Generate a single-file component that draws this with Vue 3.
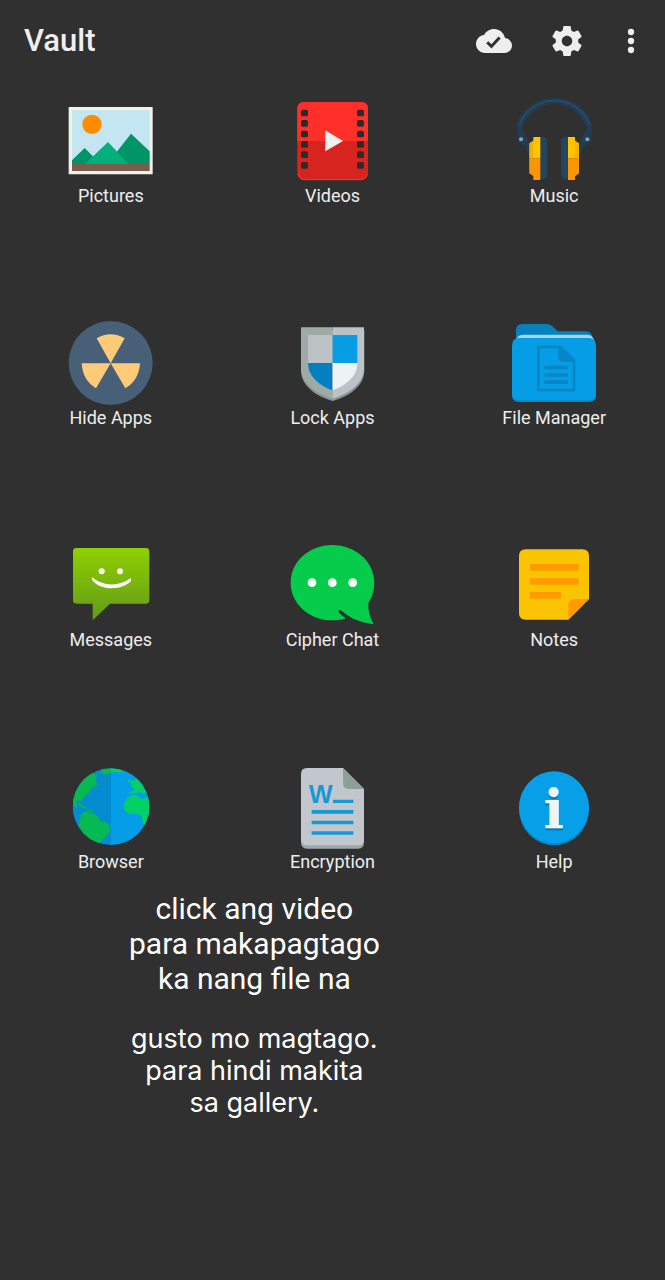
<script setup>
const apps = [
  { id: 'pictures', label: 'Pictures' },
  { id: 'videos', label: 'Videos' },
  { id: 'music', label: 'Music' },
  { id: 'hide', label: 'Hide Apps' },
  { id: 'lock', label: 'Lock Apps' },
  { id: 'files', label: 'File Manager' },
  { id: 'messages', label: 'Messages' },
  { id: 'chat', label: 'Cipher Chat' },
  { id: 'notes', label: 'Notes' },
  { id: 'browser', label: 'Browser' },
  { id: 'encryption', label: 'Encryption' },
  { id: 'help', label: 'Help' },
]
const holes = [59, 90, 122, 153, 184, 216]
</script>

<template>
  <div class="vault">
    <header class="bar">
      <h1 class="title">Vault</h1>
      <button class="action cloud" type="button" aria-label="Cloud backup">
        <svg viewBox="0 0 24 24"><path d="M19.350 10.040C18.670 6.590 15.640 4 12 4 9.110 4 6.600 5.640 5.350 8.040 2.340 8.360 0 10.910 0 14c0 3.310 2.690 6 6 6h13c2.760 0 5-2.240 5-5 0-2.640-2.050-4.780-4.650-4.960zM10.300 17l-3.500-3.500 1.410-1.410 2.090 2.080 4.700-5.170 1.480 1.340L10.300 17z" /></svg>
      </button>
      <button class="action gear" type="button" aria-label="Settings">
        <svg viewBox="0 0 24 24"><path d="M19.430 12.980c.04-.32.07-.64.07-.98s-.03-.66-.07-.98l2.110-1.650c.19-.15.24-.42.12-.64l-2-3.460c-.12-.22-.39-.3-.61-.22l-2.490 1c-.52-.4-1.080-.73-1.690-.98l-.38-2.650C14.460 2.180 14.250 2 14 2h-4c-.25 0-.46.18-.49.42l-.38 2.650c-.61.25-1.170.59-1.690.98l-2.490-1c-.23-.09-.49 0-.61.22l-2 3.460c-.13.22-.07.49.12.64l2.110 1.650c-.04.32-.07.65-.07.98s.03.66.07.98l-2.110 1.650c-.19.15-.24.42-.12.64l2 3.460c.12.22.39.3.61.22l2.490-1c.52.4 1.080.73 1.690.98l.38 2.650c.03.24.24.42.49.42h4c.25 0 .46-.18.49-.42l.38-2.650c.61-.25 1.170-.59 1.690-.98l2.490 1c.23.09.49 0 .61-.22l2-3.460c.12-.22.07-.49-.12-.64l-2.110-1.650zM12 15.500c-1.930 0-3.500-1.570-3.500-3.500s1.570-3.500 3.500-3.500 3.500 1.570 3.500 3.500-1.570 3.500-3.500 3.500z" /></svg>
      </button>
      <button class="action" type="button" aria-label="More options">
        <svg viewBox="0 0 24 24"><circle cx="12" cy="6" r="2.100" /><circle cx="12" cy="12" r="2.100" /><circle cx="12" cy="18" r="2.100" /></svg>
      </button>
    </header>

    <main>
      <nav class="grid" aria-label="Vault sections">
        <button v-for="(app, i) in apps" :key="app.id" class="tile" type="button">
          <svg class="icon" :viewBox="i % 3 ? '54 27 252 252' : '57 27 252 252'" aria-hidden="true">
            <g v-if="app.id === 'pictures'">
              <path fill="#f2f2ec" d="M56 51h252v202H56z" />
              <path fill="#c4e6f2" d="M66 61h233v182H66z" />
              <circle cx="126" cy="103" r="29" fill="#ff8c00" />
              <path fill="#009467" d="M66 211l38-37 26 26 30 22H66zM200 186l43-55 56 53v38h-99z" />
              <path fill="#02b07c" d="M105 222l69-66 62 66z" />
              <path fill="#7b5d4d" d="M66 222h233v21H66z" />
            </g>
            <g v-else-if="app.id === 'videos'">
              <rect x="76" y="36" width="212" height="234" rx="20" fill="#d8241f" />
              <path fill="#ff3029" d="M76 153V56q0-20 20-20h172q20 0 20 20v97z" />
              <path d="M79 252q4 17 18 17h170q14 0 18-17" fill="none" stroke="#f03a32" stroke-width="3" />
              <g fill="#2b2b2b">
                <template v-for="y in holes" :key="y">
                  <rect x="87" :y="y" width="21" height="20" rx="5" />
                  <rect x="255" :y="y" width="21" height="20" rx="5" />
                </template>
              </g>
              <path fill="#f1f0ef" d="M160 121l53 32-53 31z" />
            </g>
            <g v-else-if="app.id === 'music'">
              <path fill="#213c53" d="M68 102C84 58 130 24 182 24s98 34 112 78v16l-12 3C263 70 225 41 182 41S96 72 82 121l-12-3z" />
              <path fill="none" stroke="#2a4b68" stroke-width="5" d="M76 105C94 58 137 32 182 32s88 26 106 73" />
              <path fill="#213c53" d="M70 117h14l24 46v37l-15-32-23-13zM278 117h15v38l-23 13-17 32v-37z" />
              <circle cx="81" cy="148" r="6" fill="#8aa1b4" />
              <circle cx="280" cy="148" r="6" fill="#8aa1b4" />
              <path fill="#234560" d="M138 141h12q10 2 10 16v94q0 14-12 16h-10zM222 141h-9q-12 2-12 16v94q0 14 12 16h9z" />
              <path fill="#ffc400" d="M106 205v-45l12-8v-11h21v64zM222 205v-64h21v11l12 8v45z" />
              <path fill="#ff9500" d="M106 205h33v65h-21v-12l-12-8zM222 205h33v45l-12 8v12h-21z" />
              <path fill="#e89d08" d="M106 160l12-8v106l-12-8zM255 160l-12-8v106l12-8z" opacity=".5" />
            </g>
            <g v-else-if="app.id === 'hide'">
              <circle cx="182" cy="153" r="126" fill="#485f78" />
              <path fill="#ffcb78" d="M182 154L140 79Q182 54 224 79zM182 154l-44 75Q98 205 95 154zM182 154l44 75q41-24 44-75z" />
            </g>
            <g v-else-if="app.id === 'lock'">
              <path fill="#8b9692" d="M87 54h190v121c0 48-46 78-95 92-49-14-95-44-95-92z" />
              <path fill="#9daaa6" d="M87 46h95v214c-49-15-95-45-95-92z" />
              <path fill="#bcc3c8" d="M182 46h94v122c0 47-46 77-94 92z" />
              <path fill="#bdc2c7" d="M108 69h73v84h-73z" />
              <path fill="#069de5" d="M182 69h74v84h-74z" />
              <path fill="#0380bd" d="M108 153h73v82c-42-16-73-43-73-82z" />
              <path fill="#edf2f5" d="M182 153h74c0 39-32 66-74 82z" />
            </g>
            <g v-else-if="app.id === 'files'">
              <path fill="#0581be" d="M66 110V54q0-18 19-18h73q8 0 16 6l18 16h82q20 0 23 22v30z" />
              <path fill="#a3d6e7" d="M66 88q2-20 20-20h194q18 0 20 20z" />
              <path fill="#0789c9" d="M54 230h252v19q0 21-20 21H74q-20 0-20-21z" />
              <path fill="#059de5" d="M54 101q0-23 22-23h209q21 0 21 23v142q0 22-20 22H74q-20 0-20-22z" />
              <path fill="none" stroke="#0786c3" stroke-width="8" d="M133 105h67l40 40v89H133z" />
              <path fill="#0786c3" d="M193 105h11l36 40v5h-32q-15 0-15-15zM151 161h71v11h-71zM151 183h71v11h-71zM151 205h71v11h-71z" />
            </g>
            <g v-else-if="app.id === 'messages'">
              <defs>
                <linearGradient id="bubble" x1="0" y1="0" x2="0" y2="1">
                  <stop offset="0" stop-color="#8fd000" />
                  <stop offset="1" stop-color="#63991b" />
                </linearGradient>
              </defs>
              <path fill="url(#bubble)" d="M80 42h208q10 0 10 10v147q0 10-10 10H180l-52 50v-50H80q-11 0-11-10V52q0-10 11-10z" />
              <circle cx="155" cy="112" r="9" fill="#fff" />
              <circle cx="210" cy="112" r="9" fill="#fff" />
              <path fill="#fff" d="M126 129c32 29 83 29 116 3l1 9c-25 29-94 30-117-4z" />
            </g>
            <g v-else-if="app.id === 'chat'">
              <path fill="#05cd4b" d="M181 33C112 33 56 83 56 146s56 113 125 113c16 0 31-2 44-8l-24-17 5-5c34 30 66 37 99 42-12-21-17-42-16-64 11-18 18-39 18-61 0-63-57-113-126-113z" />
              <path fill="#303030" d="M200 228q5-1 9 3 12 12 27 19l-12 4q-13-6-24-19z" />
              <g fill="#fff">
                <circle cx="120" cy="146" r="13" />
                <circle cx="181" cy="146" r="13" />
                <circle cx="242" cy="146" r="13" />
              </g>
            </g>
            <g v-else-if="app.id === 'notes'">
              <path fill="#fac400" d="M95 46h170q20 0 20 20v129l-62 62H95q-20 0-20-20V66q0-20 20-20z" />
              <path fill="#ff9a00" d="M285 195l-62 62v-43q0-19 19-19zM108 90h146v20H108zM108 132h146v20H108zM108 174h93v20h-93z" />
            </g>
            <g v-else-if="app.id === 'browser'">
              <defs>
                <clipPath id="globe"><circle cx="183" cy="152" r="115" /></clipPath>
              </defs>
              <g clip-path="url(#globe)">
                <path fill="#058bd0" d="M68 37h115v231H68z" />
                <path fill="#049de8" d="M183 37h116v231H183z" />
                <path fill="#07b951" d="M62 140l22-86 36-6 21 9-5 17 9 11-19 10-9 16-12 7-10 17-13-2-5 9 8 8-5 6zM93 175l16-9 18 4 16 10 9 14 20 8 10 12-5 17-15 16-12 13-15 10-24-10-16-36-9-17zM154 48l-2-12h31v14l-9 5-11 1zM83 139l15 8 14 8-5 4-17-8zM116 161l15 2-6 4-10-2z" />
                <path fill="#03d165" d="M183 35l16 3 20 4-8 9-14-5-14 5zM235 69l12 6 13-7 14 14 16 28-14 2-7-6-14 7-12-4 11-11-10-5 1-9-9-4zM237 107l9 1-2 6-8-1zM232 125l14-7 14-1 9 9 14 2 9-8 12 26-3 50-18 12-5-7-3-22-18-7-21 2-13-12-3-13z" />
              </g>
            </g>
            <g v-else-if="app.id === 'encryption'">
              <path fill="#a0a7aa" d="M87 220h189v38q0 20-18 20H105q-18 0-18-20z" />
              <path fill="#c1c7cd" d="M105 36h108l63 63v151q0 18-18 18H105q-18 0-18-18V54q0-18 18-18z" />
              <path fill="#8d9f9b" d="M213 36l63 63h-44q-19 0-19-19z" />
              <text class="word" x="146" y="140" text-anchor="middle">W</text>
              <path fill="#1799d5" d="M183 131h61v10h-61zM119 162h125v11H119zM119 194h125v11H119zM119 226h125v10H119z" />
            </g>
            <g v-else>
              <ellipse cx="180" cy="159" rx="105" ry="109" fill="#0785c4" />
              <ellipse cx="180" cy="154" rx="105" ry="108" fill="#069fe8" />
              <text class="info shade" x="180" y="221" text-anchor="middle">i</text>
              <text class="info" x="180" y="215" text-anchor="middle">i</text>
            </g>
          </svg>
          <span class="label">{{ app.label }}</span>
        </button>
      </nav>

      <section class="notes">
        <p class="first">click ang video<br />para makapagtago<br />ka nang file na</p>
        <p class="second">gusto mo magtago.<br />para hindi makita<br />sa gallery.</p>
      </section>
    </main>
  </div>
</template>

<style>
body {
  background: #303030;
}
</style>

<style scoped>
.vault {
  min-height: 100vh;
  background: #303030;
  color: #eeeeee;
  font-family: Roboto, "Liberation Sans", sans-serif;
}
.bar {
  display: flex;
  align-items: center;
  height: 82px;
  padding: 0 16px 0 24px;
}
.title {
  flex: 1;
  margin: 0;
  font-size: 31px;
  line-height: 36px;
  font-weight: 500;
}
button {
  padding: 0;
  border: 0;
  background: none;
  color: inherit;
  font-family: inherit;
  cursor: pointer;
}
.action {
  width: 36px;
  height: 36px;
}
.action svg {
  display: block;
  width: 100%;
  height: 100%;
  fill: #eeeeee;
}
.cloud {
  margin-right: 37px;
}
.gear {
  margin-right: 28px;
}
.grid {
  display: grid;
  grid-template-columns: repeat(3, 1fr);
  grid-auto-rows: 222px;
  padding-top: 17px;
}
.tile {
  display: flex;
  flex-direction: column;
  align-items: center;
  justify-content: flex-start;
}
.icon {
  width: 84px;
  height: 84px;
  overflow: visible;
}
.label {
  margin-top: 2px;
  font-size: 18px;
  line-height: 22px;
}
.word {
  fill: #1799d5;
  font-family: "Liberation Sans", sans-serif;
  font-size: 76px;
  font-weight: 700;
}
.info {
  fill: #eef6fa;
  font-family: "DejaVu Serif", serif;
  font-size: 164px;
  font-weight: 700;
}
.shade {
  fill: #0677b2;
}
.notes {
  padding-right: 23.5%;
  margin-top: -96px;
  color: #ffffff;
  text-align: center;
}
.notes p {
  margin: 0;
}
.first {
  font-size: 30px;
  line-height: 35px;
}
.notes .second {
  margin-top: 27px;
  font-family: Inter, Roboto, sans-serif;
  font-size: 27px;
  line-height: 32px;
}
</style>
